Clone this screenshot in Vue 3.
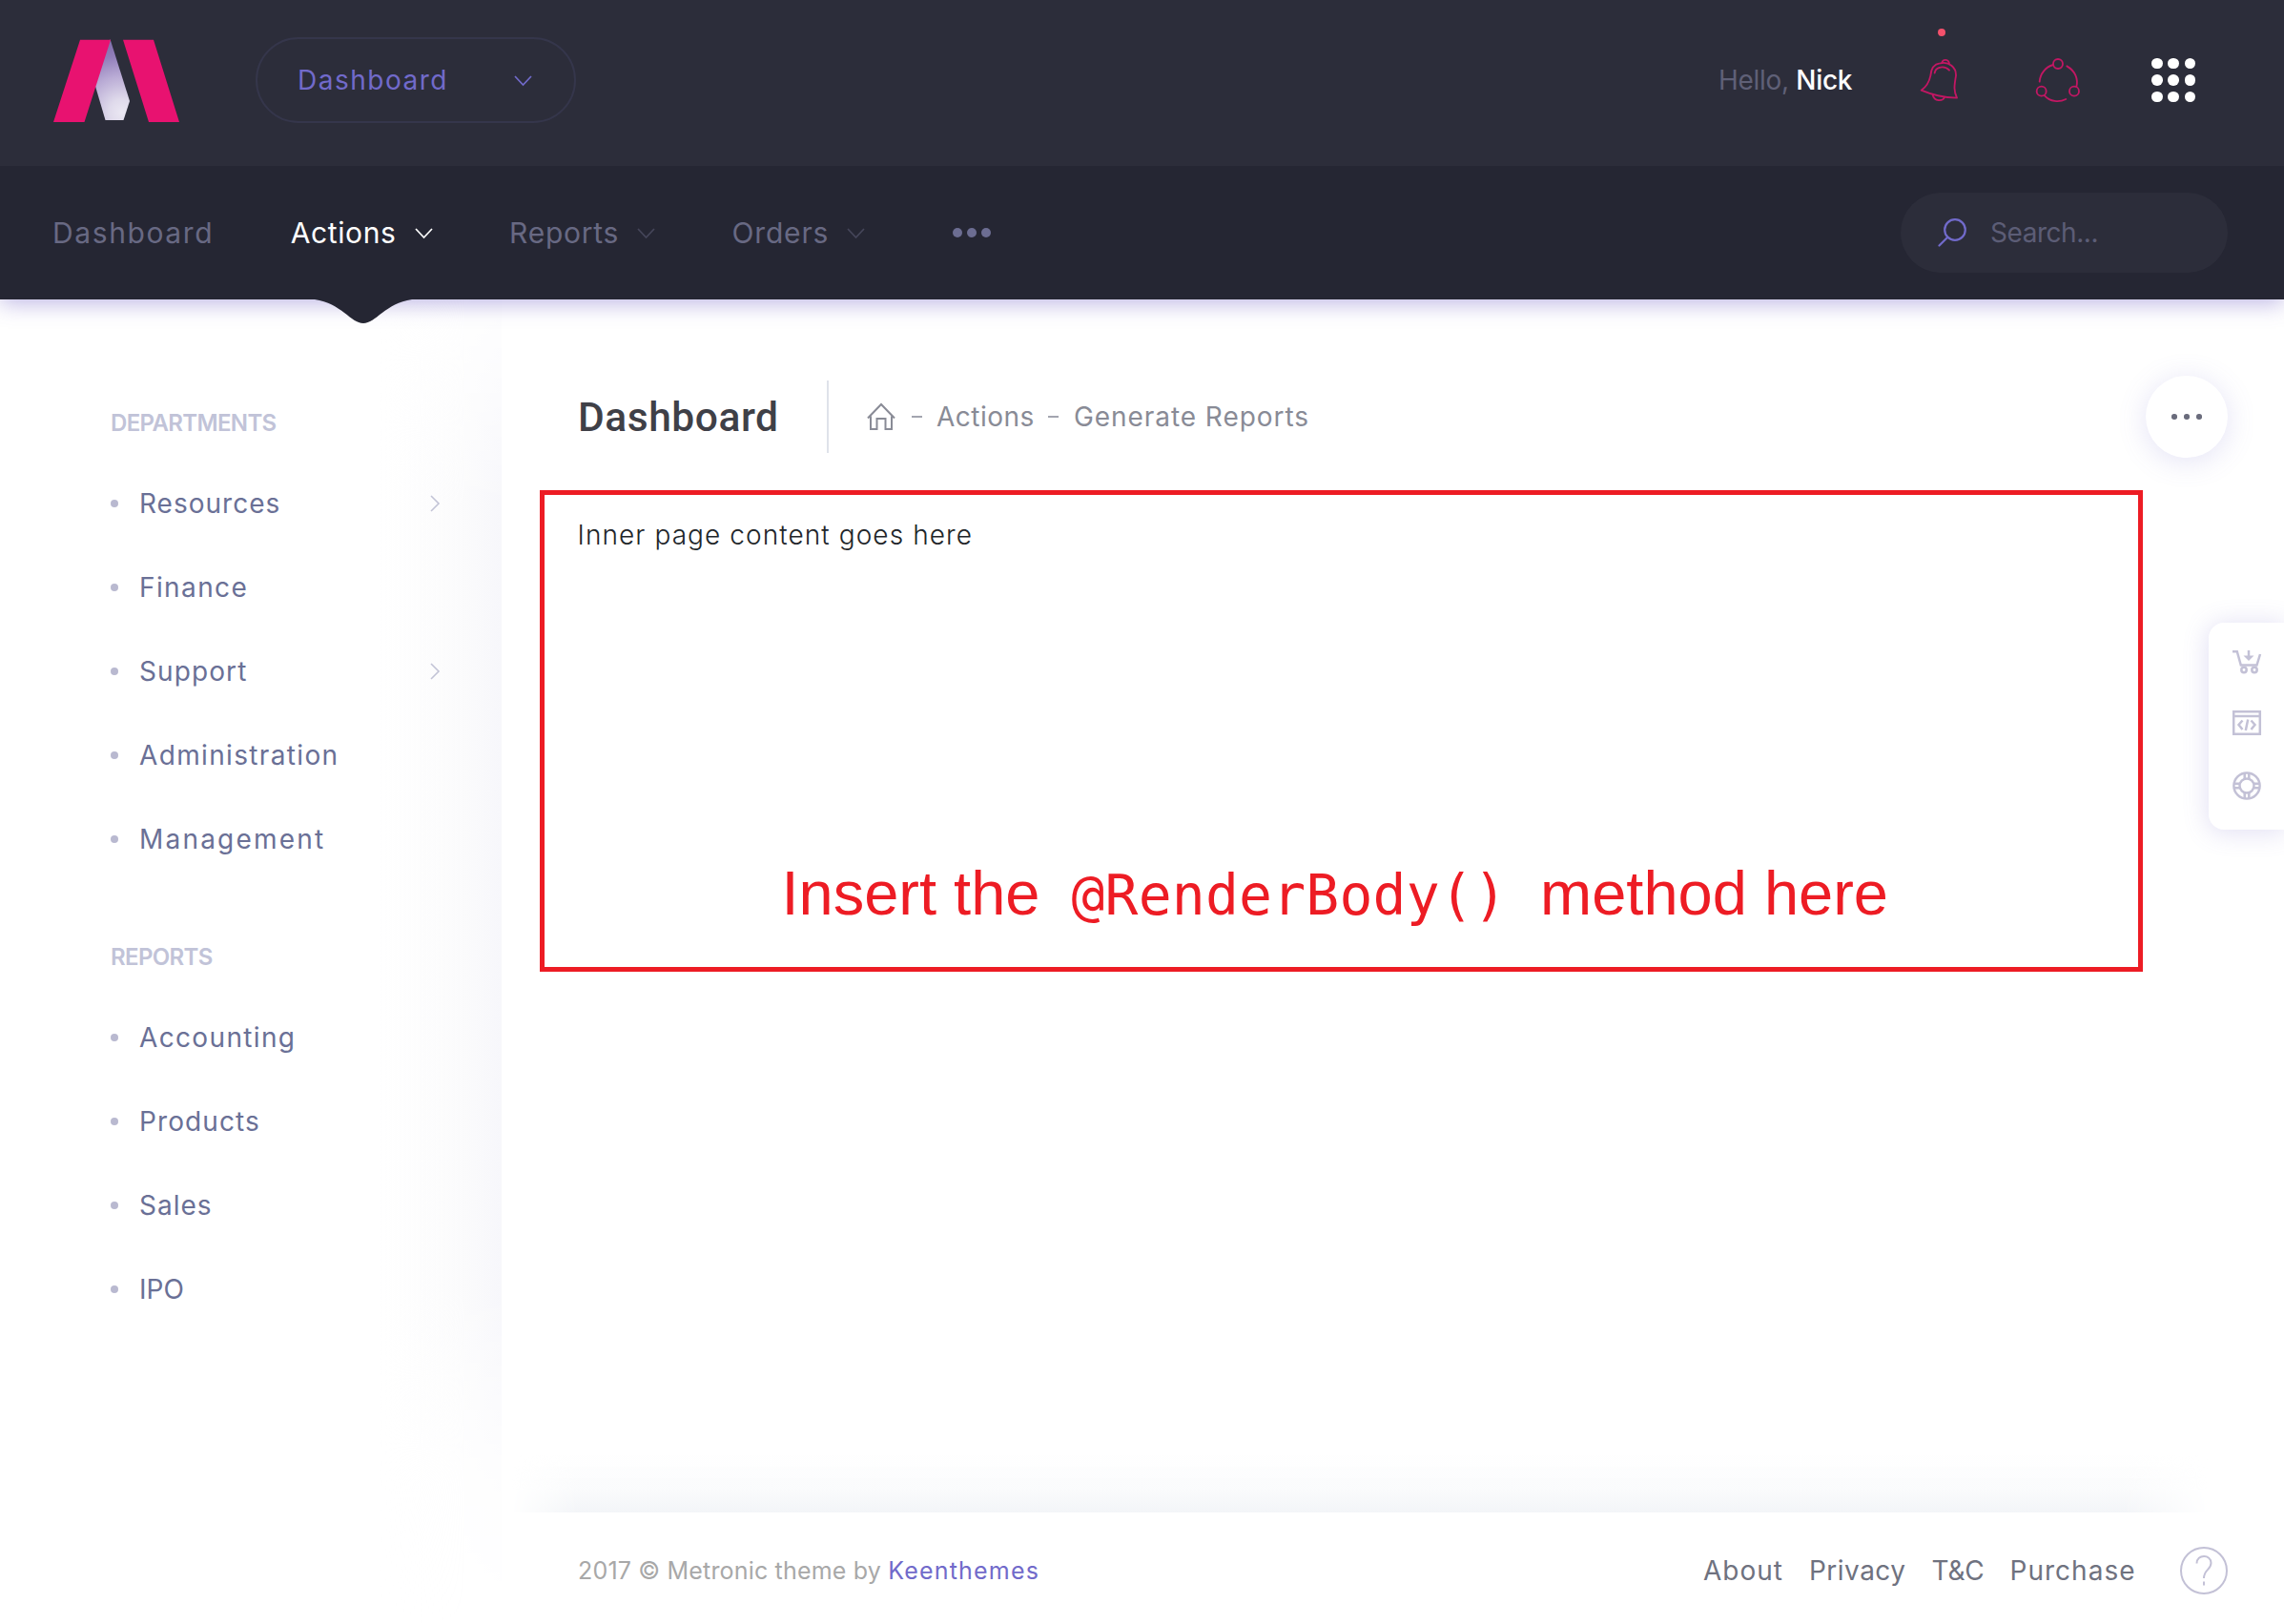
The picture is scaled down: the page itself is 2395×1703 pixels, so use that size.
<script setup>
const navItems = [
  { label: 'Dashboard', track: 1.6 },
  { label: 'Actions', track: 0.64, active: true, arrow: true },
  { label: 'Reports', track: 0.74, arrow: true },
  { label: 'Orders', track: 0.8, arrow: true },
]

const sections = [
  {
    title: 'DEPARTMENTS',
    items: [
      { label: 'Resources', track: 1, arrow: true },
      { label: 'Finance', track: 1.4 },
      { label: 'Support', track: 1.1, arrow: true },
      { label: 'Administration', track: 1.35 },
      { label: 'Management', track: 2.2 },
    ],
  },
  {
    title: 'REPORTS',
    items: [
      { label: 'Accounting', track: 1.35 },
      { label: 'Products', track: 1.1 },
      { label: 'Sales', track: 1 },
      { label: 'IPO', track: 0 },
    ],
  },
]

const footerLinks = [
  { label: 'About', track: 1 },
  { label: 'Privacy', track: 0.5 },
  { label: 'T&C', track: -0.2 },
  { label: 'Purchase', track: 1 },
]

const tracking = (t) => ({ letterSpacing: t + 'px' })
</script>

<template>
  <div class="page">
    <header class="top">
      <svg class="logo" viewBox="56 41 132 88">
        <defs>
          <radialGradient id="blade" gradientUnits="userSpaceOnUse" cx="128" cy="118" r="70">
            <stop offset="0" stop-color="#ebe8f3" />
            <stop offset="0.2" stop-color="#dfdaeb" />
            <stop offset="0.55" stop-color="#b9abd5" />
            <stop offset="0.85" stop-color="#917eba" />
            <stop offset="1" stop-color="#8673b0" />
          </radialGradient>
        </defs>
        <path d="M115.5 41 L136 106 L129.5 126 H110.5 L99 87 Z" fill="url(#blade)" />
        <path d="M84 41.700 H116 L88.500 128 H56 Z M129 41.700 H161 L188 128 H156 Z" fill="#e81270" />
      </svg>

      <div class="switcher">
        <span>Dashboard</span>
        <svg class="chev" viewBox="0 0 19 12"><path d="M1 1 L9.500 10 L18 1" /></svg>
      </div>

      <div class="user"><span class="hello">Hello,</span> <span class="name">Nick</span></div>

      <div class="bell">
        <i class="badge"></i>
        <svg viewBox="40 30 120 144" width="40" height="48">
          <path d="M45 134 C62 122 70 108 74 88 C76 64 84 51 105 49 C132 43 155 62 154 88 C148 122 147 136 157 158 C115 157 82 150 45 134 Z" />
          <path d="M110 48 C112 35 132 35 133 51 M87 80 C90 58 120 56 133 71 M81 149 C86 169 112 170 118 156" />
        </svg>
      </div>

      <svg class="share" viewBox="400 30 150 144" width="50" height="48">
        <circle cx="475" cy="51" r="15" />
        <circle cx="423" cy="137" r="15" />
        <circle cx="526" cy="137" r="15" />
        <path d="M417 107 A59 59 0 0 1 460 54 M503 58 C530 73 539 100 533 123 M433 151 C450 170 478 173 500 162" />
      </svg>

      <div class="grid"><i v-for="n in 9" :key="n"></i></div>
    </header>

    <nav class="nav">
      <a v-for="item in navItems" :key="item.label" :class="{ active: item.active }">
        <span :style="tracking(item.track)">{{ item.label }}</span>
        <svg v-if="item.arrow" class="chev" viewBox="0 0 19 12"><path d="M1 1 L9.500 10 L18 1" /></svg>
        <svg v-if="item.active" class="notch" viewBox="0 0 102 26">
          <path d="M0 0 C28 4 38 25 51 25 C64 25 74 4 102 0 Z" />
        </svg>
      </a>
      <div class="more"><i></i><i></i><i></i></div>
      <div class="search">
        <svg viewBox="0 0 30 30" width="30" height="30">
          <circle cx="18" cy="12" r="10.800" />
          <path d="M10.300 19.700 L1.500 28.500" />
        </svg>
        <span>Search...</span>
      </div>
    </nav>

    <div class="body">
      <aside class="side">
        <section v-for="s in sections" :key="s.title">
          <h4>{{ s.title }}</h4>
          <ul>
            <li v-for="item in s.items" :key="item.label">
              <i></i>
              <span :style="tracking(item.track)">{{ item.label }}</span>
              <svg v-if="item.arrow" viewBox="0 0 10 18" width="10" height="18">
                <path d="M1 1 L9 9 L1 17" />
              </svg>
            </li>
          </ul>
        </section>
      </aside>

      <main class="main">
        <div class="subheader">
          <h1>Dashboard</h1>
          <div class="crumbs">
            <svg viewBox="0 0 30 30" width="30" height="30">
              <path d="M1 16.500 L15 2 L29 16.500 M4 14.500 V28 H10.500 V17 H19.500 V28 H26 V14.500" />
            </svg>
            <b></b>
            <span class="c1">Actions</span>
            <b></b>
            <span class="c2">Generate Reports</span>
          </div>
          <button class="options"><i></i><i></i><i></i></button>
        </div>

        <div class="box">
          <p>Inner page content goes here</p>
          <div class="note">
            <span>Insert the</span>
            <code>@RenderBody()</code>
            <span>method here</span>
          </div>
        </div>

        <footer class="footer">
          <div class="copy">2017 © Metronic theme by <a>Keenthemes</a></div>
          <div class="links">
            <a v-for="l in footerLinks" :key="l.label" :style="tracking(l.track)">{{ l.label }}</a>
          </div>
          <svg class="help" viewBox="0 0 50 50" width="50" height="50">
            <circle cx="25" cy="25" r="24" />
            <path d="M17.500 17.500 C17.500 7.500 32.500 7.500 32.500 17 C32.500 24 25 24 25 33 M25 36.500 V40.500" />
          </svg>
        </footer>
      </main>
    </div>

    <div class="sticky">
      <svg viewBox="0 0 30 26" width="30" height="26">
        <path d="M0 2.200 H4.800 L8.800 16.500 H25.500 L29 5 M17 1 V9" />
        <path class="solid" d="M11.500 6.500 H22.500 L17 12 Z" />
        <circle cx="12" cy="21.500" r="2.700" />
        <circle cx="23" cy="21.500" r="2.700" />
      </svg>
      <svg viewBox="0 0 30 26" width="30" height="26">
        <path d="M1.200 1.200 H28.800 V24.800 H1.200 Z M1 6 H29 M10.500 10.500 L6.500 15 L10.500 20 M19.500 10.500 L23.500 15 L19.500 20 M16.200 9.500 L13.800 21" />
      </svg>
      <svg viewBox="0 0 30 30" width="30" height="30">
        <circle cx="15" cy="15" r="13.600" />
        <circle cx="15" cy="15" r="7.500" />
        <path d="M12.700 1.500 V8 M17.300 1.500 V8 M12.700 22 V28.500 M17.300 22 V28.500 M1.500 12.700 H8 M1.500 17.300 H8 M22 12.700 H28.500 M22 17.300 H28.500" />
      </svg>
    </div>
  </div>
</template>

<style>
body {
  margin: 0;
  background: #fff;
}
</style>

<style scoped>
.page {
  position: relative;
  width: 2395px;
  height: 1703px;
  overflow: hidden;
  display: flex;
  flex-direction: column;
  background: #fff;
  font-family: Inter, "Open Sans", sans-serif;
  font-size: 28px;
  line-height: 40px;
}
svg {
  flex: none;
  fill: none;
  overflow: visible;
}
.top {
  position: relative;
  z-index: 3;
  box-sizing: border-box;
  height: 174px;
  padding: 0 93px 6px 56px;
  display: flex;
  align-items: center;
  background: #2c2d3a;
}
.logo {
  width: 132px;
  height: 88px;
  margin-top: 2px;
}
.switcher {
  box-sizing: border-box;
  width: 336px;
  height: 90px;
  margin-left: 80px;
  padding: 0 44px 0 42px;
  display: flex;
  align-items: center;
  justify-content: space-between;
  border: 2px solid #35364b;
  border-radius: 45px;
  color: #716aca;
  letter-spacing: 1.5px;
}
.chev {
  width: 19px;
  height: 12px;
  margin-top: 2px;
  stroke: currentColor;
  stroke-width: 1.7;
}
.user {
  margin-left: auto;
  width: 211px;
  white-space: nowrap;
  letter-spacing: -0.3px;
}
.hello {
  color: #5f6077;
}
.name {
  color: #fff;
  font-weight: 500;
}
.bell {
  position: relative;
  width: 40px;
  height: 48px;
}
.bell svg,
.share {
  stroke: #c21763;
  stroke-width: 5.5;
  stroke-linecap: round;
  stroke-linejoin: round;
}
.bell svg {
  display: block;
}
.badge {
  position: absolute;
  left: 19px;
  top: -30px;
  width: 8px;
  height: 8px;
  border-radius: 50%;
  background: #f4516c;
}
.share {
  margin: 0 73px 0 80px;
}
.grid {
  display: grid;
  grid-template-columns: repeat(3, 11.500px);
  gap: 5.800px;
  width: 46px;
}
.grid i {
  height: 11.500px;
  border-radius: 50%;
  background: #fff;
}

.nav {
  position: relative;
  z-index: 2;
  box-sizing: border-box;
  height: 140px;
  padding: 0 59px 0 55px;
  display: flex;
  align-items: center;
  background: #252633;
  box-shadow: 0 4px 22px 0 rgba(98, 82, 190, 0.42);
  font-size: 30px;
}
.nav a {
  position: relative;
  height: 140px;
  margin-right: 80.500px;
  display: flex;
  align-items: center;
  color: #686983;
}
.nav a.active {
  color: #fff;
}
.nav .chev {
  margin-left: 19px;
  color: #45465a;
}
.nav .active .chev {
  color: #fff;
}
.notch {
  position: absolute;
  left: 25px;
  top: 139.500px;
  width: 102px;
  height: 26px;
  fill: #252633;
}
.more {
  display: flex;
  gap: 5px;
  margin-left: 11px;
}
.more i {
  width: 10px;
  height: 10px;
  border-radius: 50%;
  background: #6c6d92;
}
.search {
  box-sizing: border-box;
  width: 343px;
  height: 84px;
  margin-left: auto;
  padding-left: 39px;
  display: flex;
  align-items: center;
  gap: 25px;
  border-radius: 42px;
  background: #2c2d3a;
  color: #5c5d76;
  font-size: 28px;
  letter-spacing: -0.45px;
}
.search svg {
  stroke: #716aca;
  stroke-width: 2.2;
  stroke-linecap: round;
}

.body {
  flex: 1;
  display: flex;
}
.side {
  position: relative;
  box-sizing: border-box;
  width: 526px;
  padding-top: 110px;
}
.side::after {
  content: "";
  position: absolute;
  top: 0;
  right: 0;
  bottom: 0;
  width: 130px;
  background: linear-gradient(to right, rgba(250, 250, 252, 0), #fbfbfc 70%, #f7f7fb);
  mask-image: linear-gradient(to bottom, rgba(0, 0, 0, 0.1), #000 220px, #000 1040px, rgba(0, 0, 0, 0.2) 1240px, transparent);
}
.side section {
  position: relative;
  z-index: 1;
  margin-bottom: 60px;
}
.side h4 {
  margin: 0 0 20px 116px;
  color: #c1c3d8;
  font-size: 24px;
  font-weight: 600;
  letter-spacing: -0.65px;
}
.side ul {
  margin: 0;
  padding: 0;
  list-style: none;
}
.side li {
  height: 88px;
  padding: 0 65px 0 116px;
  display: flex;
  align-items: center;
  color: #6a7096;
}
.side li i {
  width: 8px;
  height: 8px;
  border-radius: 50%;
  background: #b9b9d0;
}
.side li span {
  margin-left: 22px;
}
.side li svg {
  margin-left: auto;
  stroke: #c2c3d6;
  stroke-width: 1.6;
}

.main {
  flex: 1;
  display: flex;
  flex-direction: column;
}
.subheader {
  height: 76px;
  margin: 85px 59px 0 80px;
  display: flex;
  align-items: center;
}
.subheader h1 {
  box-sizing: border-box;
  width: 263px;
  height: 76px;
  margin: 0;
  border-right: 2px solid #dfe2ea;
  color: #3f4047;
  font: 500 42.500px/77px Roboto, sans-serif;
  letter-spacing: 0.55px;
}
.crumbs {
  display: flex;
  align-items: center;
  margin-left: 40px;
  color: #898b96;
}
.crumbs svg {
  stroke: #898b96;
  stroke-width: 2;
}
.crumbs b {
  width: 11px;
  height: 2px;
  margin: 0 16px;
  background: #a3a5b0;
}
.crumbs b:first-of-type {
  margin-left: 17px;
  margin-right: 15px;
}
.c1 {
  letter-spacing: 0.5px;
}
.crumbs .c1 {
  margin-right: -2px;
}
.c2 {
  letter-spacing: 0.95px;
}
.options {
  width: 86px;
  height: 86px;
  margin: 0 0 0 auto;
  padding: 0;
  flex: none;
  display: flex;
  align-items: center;
  justify-content: center;
  gap: 7.500px;
  border: 0;
  border-radius: 50%;
  background: #fff;
  box-shadow: 0 4px 28px 2px rgba(113, 106, 202, 0.17);
}
.options i {
  width: 5.500px;
  height: 5.500px;
  border-radius: 50%;
  background: #6a6c7c;
}

.box {
  box-sizing: border-box;
  width: 1681px;
  height: 505px;
  margin: 39px 0 0 40px;
  padding: 22px 0 0 34.500px;
  border: 5px solid #ed1c24;
}
.box p {
  margin: 0;
  color: #212529;
  font-weight: 300;
  letter-spacing: 1.08px;
}
.note {
  display: flex;
  align-items: baseline;
  margin: 319px 0 0 214px;
  color: #ed1c24;
  font: 65px/74px "Liberation Sans", Arial, sans-serif;
  white-space: nowrap;
}
.note code {
  margin: 0 35px 0 33px;
  font: 58px/74px "DejaVu Sans Mono", monospace;
  letter-spacing: 0.2px;
}

.footer {
  position: relative;
  box-sizing: border-box;
  width: 1810px;
  height: 117px;
  margin-top: auto;
  padding: 4px 0 0 80px;
  display: flex;
  align-items: center;
  background: #fff;
}
.footer::before {
  content: "";
  position: absolute;
  left: 0;
  right: 0;
  bottom: 100%;
  height: 60px;
  background: linear-gradient(to bottom, rgba(243, 245, 249, 0), #fafbfc 60%, #f3f5f8);
  mask-image: linear-gradient(to right, transparent 10px, #000 80px, #000 1700px, transparent 1790px);
}
.copy {
  color: #a8a8a8;
  font-size: 25px;
  letter-spacing: 0.18px;
}
.copy a {
  color: #716aca;
  letter-spacing: 1.2px;
}
.links {
  margin-left: auto;
  display: flex;
  gap: 27px;
  color: #6f727f;
}
.help {
  margin-left: 46.500px;
  stroke: #c3c1d6;
  stroke-width: 2;
}

.sticky {
  position: absolute;
  right: 0;
  top: 653px;
  box-sizing: border-box;
  width: 79px;
  height: 217px;
  padding: 28px 0 0 25px;
  display: flex;
  flex-direction: column;
  gap: 38px;
  border-radius: 16px 0 0 16px;
  background: #fff;
  box-shadow: 0 2px 26px 2px rgba(113, 106, 202, 0.2);
}
.sticky svg {
  stroke: #c3c1d6;
  stroke-width: 2.500;
}
.sticky .solid {
  fill: #c3c1d6;
  stroke: none;
}
</style>
